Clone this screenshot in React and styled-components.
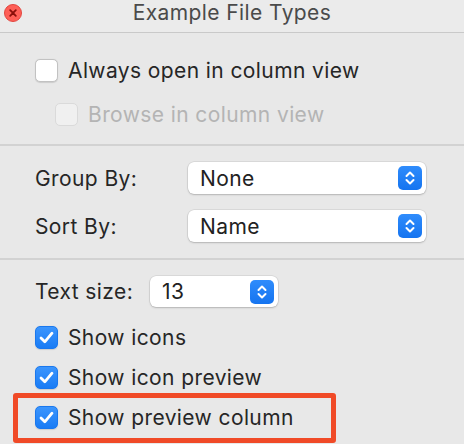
import React from "react";
import styled, { createGlobalStyle } from "styled-components";

const Global = createGlobalStyle`
  html, body { margin: 0; padding: 0; background: #e8e8e8; }
  body { font-family: Inter, "Noto Sans", "Liberation Sans", sans-serif; }
`;

const Window = styled.div`
  width: 464px;
  height: 444px;
  overflow: hidden;
  background: #e8e8e8;
  color: #262626;
  font-size: 21px;
  letter-spacing: 0.4px;
  display: flex;
  flex-direction: column;
`;

const TitleBar = styled.div`
  height: 32px;
  flex: none;
  display: flex;
  align-items: flex-start;
  justify-content: center;
  line-height: 26px;
  position: relative;
  background: #ebebeb;
  border-bottom: 1px solid #c9c9c9;
  color: #4a4a4a;
  font-size: 21px;
`;

const CloseButton = styled.div`
  position: absolute;
  left: 4px;
  top: 4px;
  width: 18px;
  height: 18px;
  border-radius: 50%;
  background: #fe5f57;
  border: 0.5px solid #e2463f;
  box-sizing: border-box;
  display: flex;
  align-items: center;
  justify-content: center;
`;

const Section = styled.div`
  position: relative;
  display: flex;
  flex-direction: column;
  gap: ${(p) => p.$gap || 0}px;
  padding: ${(p) => p.$pad};
  border-bottom: ${(p) => (p.$last ? "none" : "2px solid #d2d2d2")};
  flex: ${(p) => (p.$last ? 1 : "none")};
`;

const CheckRow = styled.label`
  display: flex;
  align-items: center;
  gap: 10px;
  height: ${(p) => p.$h || 40}px;
  padding-left: ${(p) => p.$indent || 0}px;
  color: ${(p) => (p.$disabled ? "#b4b4b4" : "#262626")};
`;

const Box = styled.span`
  width: 23px;
  height: 23px;
  box-sizing: border-box;
  border-radius: 5px;
  flex: none;
  display: flex;
  align-items: center;
  justify-content: center;
  background: ${(p) =>
    p.$checked
      ? "linear-gradient(#3b95fd, #1a7cf5)"
      : p.$disabled
      ? "#f0f0f0"
      : "#ffffff"};
  border: ${(p) =>
    p.$checked
      ? "1px solid #1a78ee"
      : p.$disabled
      ? "1px solid #dadada"
      : "1px solid #c2c2c2"};
  box-shadow: ${(p) => (p.$disabled ? "none" : "0 0.5px 1px rgba(0,0,0,0.12)")};
`;

const FieldRow = styled.div`
  display: grid;
  grid-template-columns: ${(p) => p.$cols};
  align-items: center;
  height: 32px;
`;

const Label = styled.span`
  color: #262626;
`;

const Popup = styled.div`
  height: ${(p) => p.$h || 32}px;
  width: ${(p) => p.$w}px;
  box-sizing: border-box;
  background: #ffffff;
  border-radius: 6px;
  box-shadow: 0 0 0 0.5px rgba(0,0,0,0.12), 0 1px 2px rgba(0,0,0,0.18);
  display: flex;
  align-items: center;
  justify-content: space-between;
  padding: 0 4px 0 12px;
  color: #222;
`;

const Stepper = styled.span`
  width: 24px;
  height: 24px;
  border-radius: 5px;
  background: linear-gradient(#2f8cfc, #1574f0);
  display: flex;
  align-items: center;
  justify-content: center;
`;

const Highlight = styled.div`
  position: absolute;
  left: 13px;
  top: 133px;
  width: 323px;
  height: 50px;
  box-sizing: border-box;
  border: 5px solid #f04a27;
  border-radius: 3px;
  pointer-events: none;
`;

const TextSizeRow = styled.div`
  display: flex;
  align-items: center;
  gap: 17px;
  height: 31px;
  margin-bottom: 10px;
`;

const Check = () => (
  <svg width="15" height="13" viewBox="0 0 15 13">
    <path d="M2 7 L5.8 10.8 L13 2.2" fill="none" stroke="#fff" strokeWidth="2.8" strokeLinecap="round" strokeLinejoin="round" />
  </svg>
);

const Chevrons = () => (
  <svg width="12" height="18" viewBox="0 0 12 18">
    <path d="M2.5 7 L6 3.5 L9.5 7 M2.5 11 L6 14.5 L9.5 11" fill="none" stroke="#fff" strokeWidth="2" strokeLinecap="round" strokeLinejoin="round" />
  </svg>
);

const Checkbox = ({ checked, disabled, label, indent, h }) => (
  <CheckRow $disabled={disabled} $indent={indent} $h={h}>
    <Box $checked={checked} $disabled={disabled}>{checked && <Check />}</Box>
    {label}
  </CheckRow>
);

const Select = ({ value, w, h }) => (
  <Popup $w={w} $h={h}>
    {value}
    <Stepper><Chevrons /></Stepper>
  </Popup>
);

export default function App() {
  return (
    <>
      <Global />
      <Window>
        <TitleBar>
          <CloseButton>
            <svg width="8" height="8" viewBox="0 0 8 8">
              <path d="M1.2 1.2 L6.8 6.8 M6.8 1.2 L1.2 6.8" stroke="#8a0f0a" strokeWidth="1.8" strokeLinecap="round" />
            </svg>
          </CloseButton>
          Example File Types
        </TitleBar>
        <Section $pad="15px 35px 8px">
          <Checkbox label="Always open in column view" h={44} />
          <Checkbox label="Browse in column view" disabled indent={20} h={44} />
        </Section>
        <Section $pad="16px 38px 16px 35px" $gap={16}>
          <FieldRow $cols="153px 238px">
            <Label>Group By:</Label>
            <Select value="None" w={238} />
          </FieldRow>
          <FieldRow $cols="153px 238px">
            <Label>Sort By:</Label>
            <Select value="Name" w={238} />
          </FieldRow>
        </Section>
        <Section $pad="16px 35px 0" $last>
          <TextSizeRow>
            <Label>Text size:</Label>
            <Select value="13" w={128} h={31} />
          </TextSizeRow>
          <Checkbox label="Show icons" checked />
          <Checkbox label="Show icon preview" checked />
          <Checkbox label="Show preview column" checked />
          <Highlight />
        </Section>
      </Window>
    </>
  );
}
